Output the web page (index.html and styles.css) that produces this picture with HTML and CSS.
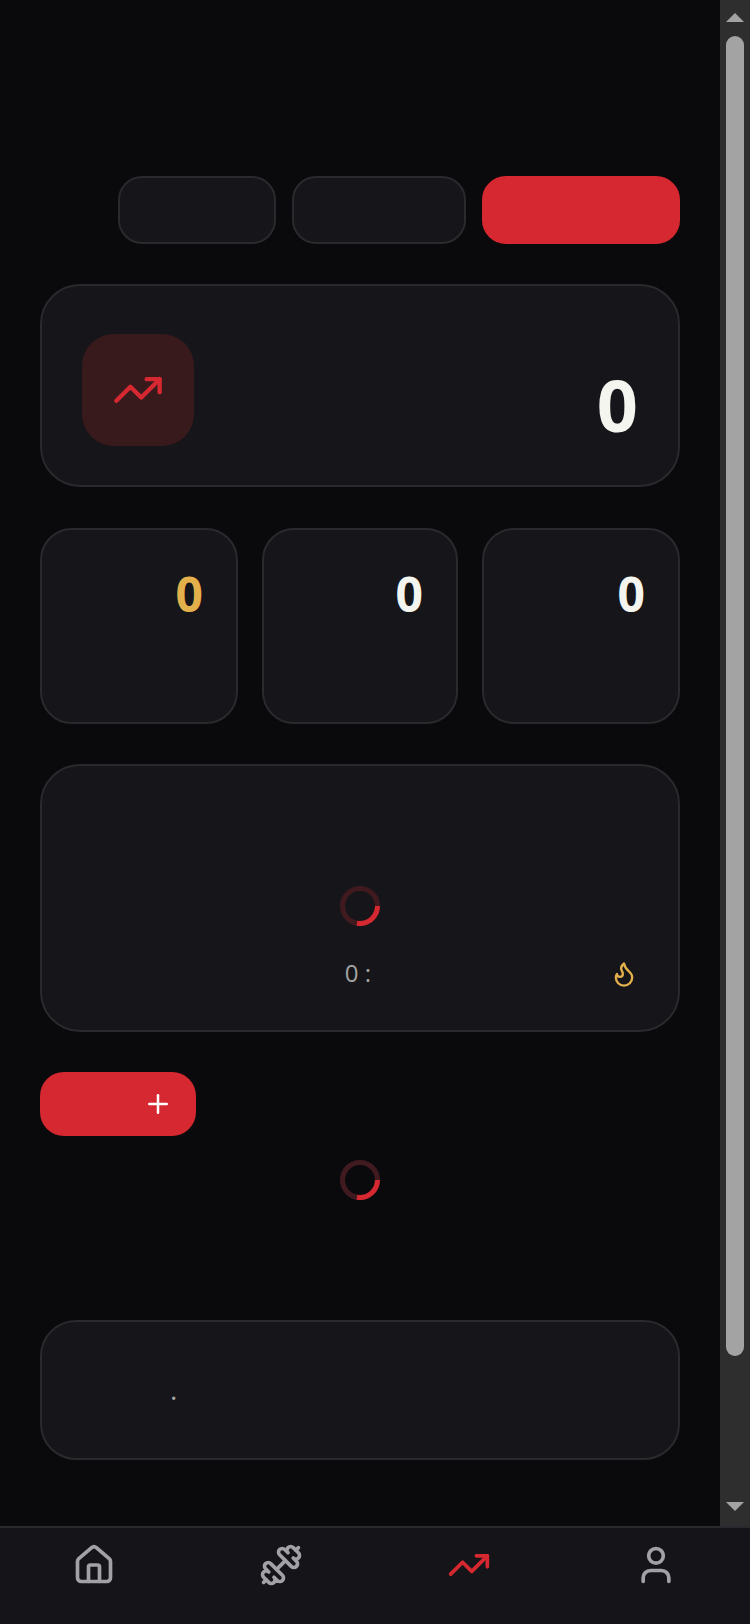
FILE: index.html
```html
<!DOCTYPE html>
<html lang="en">
<head>
  <meta charset="UTF-8">
  <meta name="viewport" content="width=device-width, initial-scale=1">
  <title>Progress</title>
  <link rel="stylesheet" href="styles.css">
</head>
<body>
  <div class="app">
    <div class="view">
      <main class="main">
        <div class="tabs">
          <button class="tab tab-week"></button>
          <button class="tab tab-month"></button>
          <button class="tab tab-all active"></button>
        </div>

        <section class="card hero">
          <div class="hero-icon">
            <svg class="icon icon-trend" viewBox="0 0 24 24"><path d="M16 7h6v6"/><path d="m22 7-8.5 8.5-5-5L2 17"/></svg>
          </div>
          <div class="hero-value">0</div>
        </section>

        <section class="stats">
          <div class="card stat"><div class="stat-value gold">0</div></div>
          <div class="card stat"><div class="stat-value">0</div></div>
          <div class="card stat"><div class="stat-value">0</div></div>
        </section>

        <section class="card streak">
          <svg class="spinner" viewBox="0 0 40 40"><circle class="spinner-track" cx="20" cy="20" r="17.5"/><path class="spinner-arc" d="M37.5 20A17.5 17.5 0 0 1 17 37.2"/></svg>
          <div class="streak-row">
            <span></span>
            <span class="streak-text">0 :</span>
            <svg class="icon icon-flame" viewBox="0 0 24 24"><path d="M8.5 14.5A2.5 2.5 0 0 0 11 12c0-1.38-.5-2-1-3-1.072-2.143-.224-4.054 2-6 .5 2.5 2 4.9 4 6.5 2 1.6 3 3.5 3 5.5a7 7 0 1 1-14 0c0-1.153.433-2.294 1-3a2.5 2.5 0 0 0 2.5 2.5z"/></svg>
          </div>
        </section>

        <button class="add-btn">
          <svg class="icon icon-plus" viewBox="0 0 24 24"><path d="M5 12h14"/><path d="M12 5v14"/></svg>
        </button>

        <div class="loading">
          <svg class="spinner" viewBox="0 0 40 40"><circle class="spinner-track" cx="20" cy="20" r="17.5"/><path class="spinner-arc" d="M37.5 20A17.5 17.5 0 0 1 17 37.2"/></svg>
        </div>

        <section class="card note">
          <p class="note-text">.</p>
        </section>
      </main>

      <div class="scrollbar">
        <span class="arrow-up"></span>
        <span class="thumb"></span>
        <span class="arrow-down"></span>
      </div>
    </div>

    <nav class="bottom-nav">
      <a class="nav-item" href="#">
        <svg class="icon icon-nav" viewBox="0 0 24 24"><path d="M15 21v-8a1 1 0 0 0-1-1h-4a1 1 0 0 0-1 1v8"/><path d="M3 10a2 2 0 0 1 .709-1.528l7-5.999a2 2 0 0 1 2.582 0l7 5.999A2 2 0 0 1 21 10v9a2 2 0 0 1-2 2H5a2 2 0 0 1-2-2z"/></svg>
      </a>
      <a class="nav-item" href="#">
        <svg class="icon icon-nav mirror" viewBox="0 0 24 24"><path d="M14.4 14.4 9.6 9.6"/><path d="M18.657 21.485a2 2 0 1 1-2.829-2.828l-1.767 1.768a2 2 0 1 1-2.829-2.829l6.364-6.364a2 2 0 1 1 2.829 2.829l-1.768 1.767a2 2 0 1 1 2.828 2.829z"/><path d="m21.5 21.5-1.4-1.4"/><path d="M3.9 3.9 2.5 2.5"/><path d="M6.404 12.768a2 2 0 1 1-2.829-2.829l1.768-1.767a2 2 0 1 1-2.828-2.829l2.828-2.828a2 2 0 1 1 2.829 2.828l1.767-1.768a2 2 0 1 1 2.829 2.829z"/></svg>
      </a>
      <a class="nav-item active" href="#">
        <svg class="icon icon-nav" viewBox="0 0 24 24"><path d="M16 7h6v6"/><path d="m22 7-8.5 8.5-5-5L2 17"/></svg>
      </a>
      <a class="nav-item" href="#">
        <svg class="icon icon-nav" viewBox="0 0 24 24"><path d="M19 21v-2a4 4 0 0 0-4-4H9a4 4 0 0 0-4 4v2"/><circle cx="12" cy="7" r="4"/></svg>
      </a>
    </nav>
  </div>
</body>
</html>
```

FILE: styles.css
```css
body {
  font-family: 'Open Sans', 'Liberation Sans', sans-serif;
  margin: 0;
  padding: 0;
  background: #0a0a0c;
  color: #f5f5f0;
  height: 1624px;
  overflow: hidden;
}

.app {
  display: flex;
  flex-direction: column;
  height: 100%;
}

.view {
  flex: 1;
  display: flex;
  min-height: 0;
}

.main {
  flex: 1;
  padding: 176px 40px 0;
  min-width: 0;
}

.icon {
  fill: none;
  stroke: currentColor;
  stroke-width: 2;
  stroke-linecap: round;
  stroke-linejoin: round;
  display: block;
}

.card {
  background: #16161a;
  border: 2px solid #2a2a2e;
  border-radius: 40px;
  box-sizing: border-box;
}

/* tabs */
.tabs {
  display: flex;
  justify-content: flex-end;
  gap: 16px;
  margin-bottom: 40px;
}

.tab {
  height: 68px;
  background: #16161a;
  border: 2px solid #2a2a2e;
  border-radius: 24px;
  padding: 0;
}

.tab-week { width: 158px; }
.tab-month { width: 174px; }

.tab-all {
  width: 198px;
}

.tab.active {
  background: #d62830;
  border-color: #d62830;
}

/* hero */
.hero {
  display: flex;
  justify-content: space-between;
  align-items: flex-end;
  padding: 48px 40px 39px;
  margin-bottom: 41px;
}

.hero-icon {
  width: 112px;
  height: 112px;
  border-radius: 32px;
  background: #381a1d;
  color: #d62830;
  display: flex;
  align-items: center;
  justify-content: center;
}

.icon-trend {
  width: 52px;
  height: 52px;
}

.hero-value {
  font-size: 72px;
  font-weight: 700;
  line-height: 84px;
}

/* stats */
.stats {
  display: grid;
  grid-template-columns: 198px 196px 1fr;
  gap: 24px;
  margin-bottom: 40px;
}

.stat {
  height: 196px;
  border-radius: 32px;
  padding: 36px 33px 0;
  text-align: right;
}

.stat-value {
  font-size: 48px;
  font-weight: 700;
  line-height: 56px;
}

.gold {
  color: #e3b04b;
}

/* streak */
.streak {
  height: 268px;
  padding-top: 120px;
  margin-bottom: 40px;
}

.spinner {
  display: block;
  width: 40px;
  height: 40px;
  margin: 0 auto;
  fill: none;
  stroke-width: 5;
}

.spinner-track {
  stroke: #401a1f;
}

.spinner-arc {
  stroke: #d62830;
}

.streak-row {
  display: grid;
  grid-template-columns: 1fr auto 1fr;
  align-items: center;
  margin-top: 32px;
  padding-right: 40px;
}

.streak-text {
  font-size: 24px;
  line-height: 30px;
  color: #a3a3a3;
  padding: 0 0 2px 36px;
}

.icon-flame {
  width: 28px;
  height: 28px;
  color: #e3b04b;
  justify-self: end;
}

/* add button */
.add-btn {
  display: flex;
  align-items: center;
  justify-content: flex-end;
  width: 156px;
  height: 64px;
  margin-bottom: 24px;
  padding: 0 23px 0 0;
  background: #d62830;
  border: none;
  border-radius: 24px;
  color: #fff;
}

.icon-plus {
  width: 30px;
  height: 30px;
}

.loading {
  margin-bottom: 120px;
}

/* note */
.note {
  height: 140px;
  border-radius: 36px;
  padding: 0 0 2px 128px;
  display: flex;
  align-items: center;
}

.note-text {
  margin: 0;
  font-size: 28px;
  line-height: 28px;
  color: #a3a3a3;
}

/* scrollbar */
.scrollbar {
  width: 30px;
  background: #2e2e2e;
  display: flex;
  flex-direction: column;
  align-items: center;
  padding: 13px 0 15px;
  box-sizing: border-box;
}

.arrow-up,
.arrow-down {
  width: 0;
  height: 0;
  border-left: 9px solid transparent;
  border-right: 9px solid transparent;
}

.arrow-up {
  border-bottom: 9px solid #a3a3a3;
}

.arrow-down {
  border-top: 9px solid #a3a3a3;
  margin-top: auto;
}

.thumb {
  width: 18px;
  height: 1320px;
  margin-top: 14px;
  border-radius: 9px;
  background: #a3a3a3;
}

/* bottom nav */
.bottom-nav {
  height: 98px;
  box-sizing: border-box;
  display: flex;
  background: #151519;
  border-top: 2px solid #2a2a2e;
}

.nav-item {
  flex: 1;
  display: flex;
  justify-content: center;
  padding-top: 15px;
  color: #a1a1a6;
}

.nav-item.active {
  color: #d62830;
}

.icon-nav {
  width: 44px;
  height: 44px;
}

.mirror {
  transform: scaleX(-1);
}
```
